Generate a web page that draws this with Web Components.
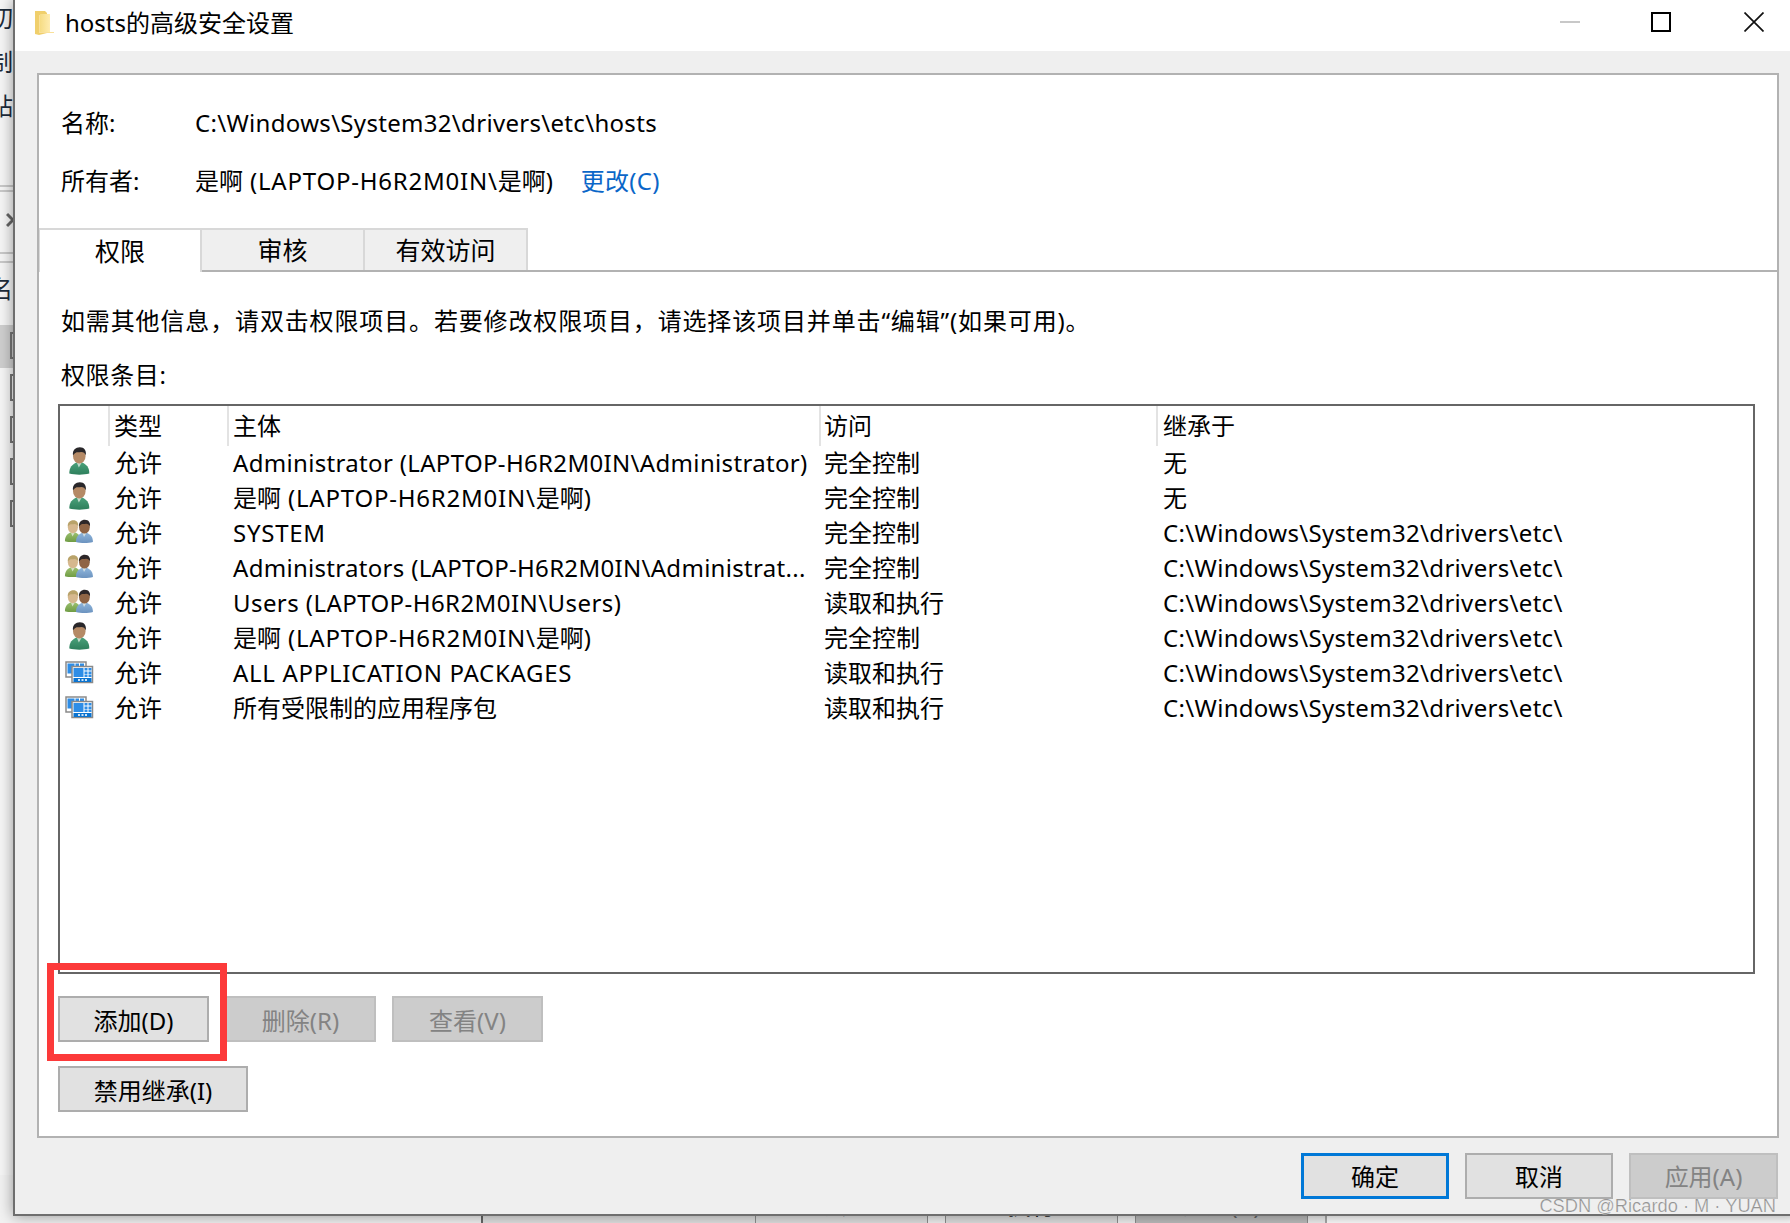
<!DOCTYPE html>
<html lang="zh-CN"><head><meta charset="utf-8"><title>hosts的高级安全设置</title>
<style>
html,body{margin:0;padding:0;background:#fff;overflow:hidden}
body{width:1790px;height:1223px;font:24px/35px "Noto Sans","Noto Sans CJK SC",sans-serif;color:#000}
</style></head><body>
<sec-desktop>
  <bg-window slot="back"></bg-window>
  <sec-dialog slot="front" heading="hosts的高级安全设置">
    <sec-info></sec-info>
    <sec-tabs></sec-tabs>
    <p style="margin:31px 0 0 3px;height:35px;letter-spacing:.86px">如需其他信息，请双击权限项目。若要修改权限项目，请选择该项目并单击“编辑”(如果可用)。</p>
    <p style="margin:19px 0 0 3px;height:35px;letter-spacing:.6px">权限条目:</p>
    <acl-list style="margin-top:12px"></acl-list>
    <acl-actions></acl-actions>
  </sec-dialog>
  <note-mark slot="over"></note-mark>
  <water-mark slot="over">CSDN @Ricardo · M · YUAN</water-mark>
</sec-desktop>
<script>
const T=(s,ls)=>s.replace(/[\x20-\x7e]+/g,m=>`<span style="letter-spacing:${ls}px">${m}</span>`);
const def=(name,html)=>{
  customElements.define(name,class extends HTMLElement{
    constructor(){super();this.attachShadow({mode:"open"}).innerHTML=typeof html==="function"?html(this):html;}
  });
};
def("sec-desktop",`<style>:host{display:block;position:relative;width:1790px;height:1223px;overflow:hidden;background:#fff}</style><slot name="back"></slot><slot name="front"></slot><slot name="over"></slot>`);

def("bg-window",`<style>
:host{position:absolute;inset:0;display:flex;flex-direction:column;background:#fff;color:#1d2b3a}
.side{width:13px;height:1175px;overflow:hidden;flex:none;background:#f6f6f6}
.c{display:block;margin-left:-11px;height:44px;line-height:44px;white-space:nowrap}
.c.first{margin-top:-4px}
.rule{height:2px;background:#c9c9c9}
.chev{margin:0 0 0 6px;height:20px;display:block}
.band{background:#cfcfcf;height:43px;margin-top:14px;padding-top:7px;box-sizing:border-box}
.cb{display:block;width:10px;height:27px;margin-left:10px;border:2px solid #777;border-right:0;box-sizing:border-box}
.cb+.cb{margin-top:15px}
.foot{flex:none;height:48px;display:flex;background:#fff;color:#222}
.foot>*{box-sizing:border-box;text-align:center;line-height:60px}
.l{width:481px;background:#f2f2f2}
.m{width:274px;background:#e2e2e2;border-left:2px solid #666}
.b{width:173px;background:#e0e0e0;border-left:1px solid #8e8e8e;border-right:1px solid #8e8e8e}
.g{width:17px;background:#f0f0f0}
.d{background:#bdbdbd;color:#666}
.r{flex:1;background:#fff;border-left:2px solid #aaa}
</style>
<div class="side">
  <span class="c first">切</span><span class="c">制</span><span class="c">贴</span>
  <div class="rule" style="margin-top:57px"></div><div class="rule" style="margin-top:3px"></div>
  <svg class="chev" style="margin-top:18px" width="8" height="14" viewBox="0 0 8 14"><path d="M1 1l6 6-6 6" fill="none" stroke="#666" stroke-width="3"/></svg>
  <div class="rule" style="margin-top:22px"></div><div class="rule" style="margin-top:7px"></div>
  <span class="c" style="height:44px;margin-top:4px">名</span>
  <div class="band"><span class="cb"></span></div>
  <span class="cb" style="margin-top:6px"></span><span class="cb"></span><span class="cb"></span><span class="cb"></span>
</div>
<div class="foot"><div class="l"></div><div class="m"></div><div class="b">确定</div><div class="g"></div><div class="b">执行</div><div class="g"></div><div class="b d">应用(A)</div><div class="g"></div><div class="r"></div></div>`);

def("sec-dialog",h=>`<style>
:host{position:absolute;left:13px;top:0;width:1787px;height:1216px;box-sizing:border-box;border-left:2px solid #6e6e6e;border-bottom:2px solid #6e6e6e;background:#efefef;display:flex;flex-direction:column;box-shadow:0 0 14px rgba(0,0,0,.4)}
.title{height:51px;box-sizing:border-box;padding:0 0 7px 19px;flex:none;background:#fff;display:flex;align-items:center}
.folder{margin-right:12px;flex:none}
.name{flex:1;font-size:24px}
.ctl{width:92px;height:44px;display:flex;align-items:center;justify-content:center;flex:none}
.ctl.mx{margin-right:1px;margin-left:-1px}
.panel{margin:22px 21px 0 22px;height:1065px;flex:none;box-sizing:border-box;border:2px solid #b2b2b2;background:#fff;display:flex;flex-direction:column;padding:0 22px 0 19px}
.foot{display:flex;justify-content:flex-end;gap:16px;padding:15px 22px 0 0}
::slotted(p){margin:0;white-space:nowrap}
</style>
<div class="title">
  <svg class="folder" width="20" height="27" viewBox="0 0 20 27"><defs><linearGradient id="f" x1="0" x2="1"><stop offset="0" stop-color="#f6dc84"/><stop offset="1" stop-color="#ffecb0"/></linearGradient></defs><path d="M1 2h10l2 2v20l-8 2-4-1z" fill="#f0cf6c"/><path d="M5 6h10v17h5v1H5z" fill="#f9e09a"/><path d="M6 5h10v18H6z" fill="url(#f)"/></svg>
  <div class="name" style="margin-left:-1px">${h.getAttribute("heading")}</div>
  <div class="ctl"><svg width="20" height="2"><rect width="20" height="2" fill="#c8c8c8"/></svg></div>
  <div class="ctl mx"><svg width="20" height="20"><rect x="1" y="1" width="18" height="18" fill="none" stroke="#000" stroke-width="2"/></svg></div>
  <div class="ctl"><svg width="20" height="20"><path d="M0.5 0.5l19 19M19.5 .5l-19 19" stroke="#111" stroke-width="1.7"/></svg></div>
</div>
<div class="panel"><slot></slot></div>
<div class="foot"><win-button w="148" kind="default" style="padding-top:1px">确定</win-button><win-button w="148" style="padding-top:1px">取消</win-button><win-button w="149" disabled style="padding-top:1px">应用(A)</win-button></div>`);

def("win-button",h=>{
 const w=h.getAttribute("w"),dis=h.hasAttribute("disabled"),k=h.getAttribute("kind");
 const bg=dis?"#cccccc":"#e1e1e1",bd=k==="default"?"3px solid #0078d7":dis?"2px solid #bfbfbf":"2px solid #adadad",col=dis?"#838383":"#000";
 return `<style>:host{display:flex;align-items:center;justify-content:center;box-sizing:border-box;width:${w}px;height:46px;background:${bg};border:${bd};color:${col};flex:none;line-height:1;white-space:nowrap;padding-top:3px}</style><slot></slot>`;
});

def("sec-info",`<style>
:host{display:grid;grid-template-columns:134px auto 1fr;row-gap:23px;margin:30px 0 0 3px;line-height:35px;white-space:nowrap}
a{color:#0a66c8;text-decoration:none;margin-left:27px;letter-spacing:.3px}
</style>
<span>名称:</span><span style="grid-column:2/4">${T("C:\\Windows\\System32\\drivers\\etc\\hosts",.31)}</span>
<span>所有者:</span><span>${T("是啊 (LAPTOP-H6R2M0IN\\是啊)",.78)}</span><span><a>更改(C)</a></span>`);

def("sec-tabs",`<style>
:host{display:flex;margin:30px -22px 0 -19px;height:44px;box-sizing:border-box;border-bottom:2px solid #b2b2b2;flex:none;font-size:25px}
div{width:163px;height:42px;box-sizing:border-box;display:flex;align-items:center;justify-content:center;background:#efefef;border:2px solid #d8d8d8;border-left:0;border-bottom:0;white-space:nowrap}
.a{background:#fff;height:44px;border-left:1px solid #d8d8d8;position:relative;z-index:1}
</style><div class="a">权限</div><div>审核</div><div>有效访问</div>`);

const person=(id,x,y,s,skin,hair,body,bodyD)=>`
<g transform="translate(${x} ${y}) scale(${s})">
<linearGradient id="b${id}" x1="0" y1="0" x2="0" y2="1"><stop offset="0" stop-color="${body}"/><stop offset="1" stop-color="${bodyD}"/></linearGradient>
<path d="M.5 26.5C.5 20 3.5 17.5 7.5 15.5L13.5 15.5C17.5 17.5 20.5 20 20.5 26.5C15 28 6 28 .5 26.5Z" fill="url(#b${id})"/>
<path d="M8 15.5L10 20.5L13 15.5Z" fill="#e8efe8" opacity=".75"/>
<ellipse cx="10.5" cy="9" rx="6.3" ry="7.6" fill="${skin}"/>
<path d="M4.2 8.5C3.4 3 7 .3 11 .3 15.5 .3 17.8 3.5 17 8.5 16.3 6 14.6 5 12.5 5 10 5.4 7.8 5 7 5.7 5.8 6.3 4.8 7.3 4.2 8.5Z" fill="${hair}"/>
</g>`;
def("acl-icon",h=>{
 const t=h.getAttribute("type"),u=h.getAttribute("uid")||"0";let g="";
 if(t==="user") g=person("u"+u,3.8,0,1,"#b58a66","#29272a","#4aa17a","#2e7f5c");
 if(t==="group") g=person("a"+u,-.5,3,.8,"#d6b88e","#b9a36a","#9cc06f","#6f9c44")+person("c"+u,10.5,2.5,.85,"#8f6445","#2c2628","#8fb6dc","#6c93bf");
 if(t==="app") g=`<g transform="translate(0 2)"><rect x="1" y="3" width="20" height="15" fill="#fff" stroke="#8a8a8a" stroke-width="1.5"/><rect x="2.5" y="4.5" width="7" height="10" fill="#2e8de6"/><rect x="10.5" y="4.5" width="3.5" height="3" fill="#2e8de6"/><rect x="15" y="4.5" width="4" height="3" fill="#2e8de6"/>
 <rect x="7" y="7.5" width="20.5" height="16" fill="#fff" stroke="#8a8a8a" stroke-width="1.5"/><rect x="8.5" y="9" width="10" height="9" fill="#2e8de6"/><rect x="19.5" y="9" width="3" height="2.5" fill="#2e8de6"/><rect x="23.5" y="9" width="3" height="2.5" fill="#2e8de6"/><rect x="19.5" y="12.5" width="3" height="2.5" fill="#2e8de6"/><rect x="23.5" y="12.5" width="3" height="2.5" fill="#2e8de6"/><rect x="19.5" y="15.5" width="3" height="2.5" fill="#2e8de6"/><rect x="23.5" y="15.5" width="3" height="2.5" fill="#2e8de6"/><rect x="8.5" y="19" width="18" height="4" fill="#0b74d1"/><rect x="13" y="20.2" width="2" height="1.6" fill="#fff"/><rect x="16.5" y="20.2" width="2" height="1.6" fill="#fff"/><rect x="20" y="20.2" width="2" height="1.6" fill="#fff"/></g>`;
 return `<style>:host{display:block;width:28px;height:28px}svg{display:block;overflow:visible}</style><svg width="28" height="28" viewBox="0 0 28 28">${g}</svg>`;
});

const P="C:\\Windows\\System32\\drivers\\etc\\",PS=.32;
const rows=[
["user","Administrator (LAPTOP-H6R2M0IN\\Administrator)",.33,"完全控制","无"],
["user","是啊 (LAPTOP-H6R2M0IN\\是啊)",.78,"完全控制","无"],
["group","SYSTEM",.75,"完全控制",P],
["group","Administrators (LAPTOP-H6R2M0IN\\Administrat...",.3,"完全控制",P],
["group","Users (LAPTOP-H6R2M0IN\\Users)",.43,"读取和执行",P],
["user","是啊 (LAPTOP-H6R2M0IN\\是啊)",.78,"完全控制",P],
["app","ALL APPLICATION PACKAGES",.7,"读取和执行",P],
["app","所有受限制的应用程序包",0,"读取和执行",P]];
const cols="48px 119px 592px 337px 1fr";
def("acl-list",`<style>
:host{display:block;height:570px;box-sizing:border-box;border:2px solid #666;background:#fff;flex:none}
.r{display:grid;grid-template-columns:${cols};height:35px;line-height:35px;white-space:nowrap}
.h{height:39px;line-height:40px}
.h>span{border-left:2px solid #e3e3e3;padding-left:4px}
.h>span:first-child{border:0}
.r:not(.h)>span{padding-left:6px;overflow:hidden}
.r:not(.h)>span:first-child{padding:0 0 0 5px;display:flex;align-items:center;margin-top:-3px}
.r>span:nth-child(4){padding-left:5px !important}
.h>span:nth-child(4){padding-left:3px !important}
.r:not(.h)>span:nth-child(5){padding-left:7px}
.h>span:nth-child(5){padding-left:5px}
</style>
<div class="r h"><span></span><span>类型</span><span>主体</span><span>访问</span><span>继承于</span></div>
${rows.map((r,i)=>`<div class="r"><span><acl-icon type="${r[0]}" uid="${i}"></acl-icon></span><span>允许</span><span>${T(r[1],r[2])}</span><span>${r[3]}</span><span>${r[4].startsWith("C:")?T(r[4],PS):r[4]}</span></div>`).join("")}`);

def("acl-actions",`<style>
:host{display:flex;flex-direction:column;gap:24px;margin-top:22px}
.row{display:flex;gap:16px}
</style>
<div class="row"><win-button w="151">添加(D)</win-button><win-button w="151" disabled>删除(R)</win-button><win-button w="151" disabled>查看(V)</win-button></div>
<div class="row"><win-button w="190">禁用继承(I)</win-button></div>`);

def("note-mark",`<style>:host{position:absolute;left:47px;top:963px;width:180px;height:98px;box-sizing:border-box;border:7px solid #fc3a3a;pointer-events:none}</style>`);
def("water-mark",`<style>:host{position:absolute;right:14px;top:1195px;font:18.3px/22px "Liberation Sans",sans-serif;color:rgba(125,125,125,.8);white-space:nowrap;-webkit-text-stroke:.2px #fff}</style><slot></slot>`);
</script>
</body></html>
